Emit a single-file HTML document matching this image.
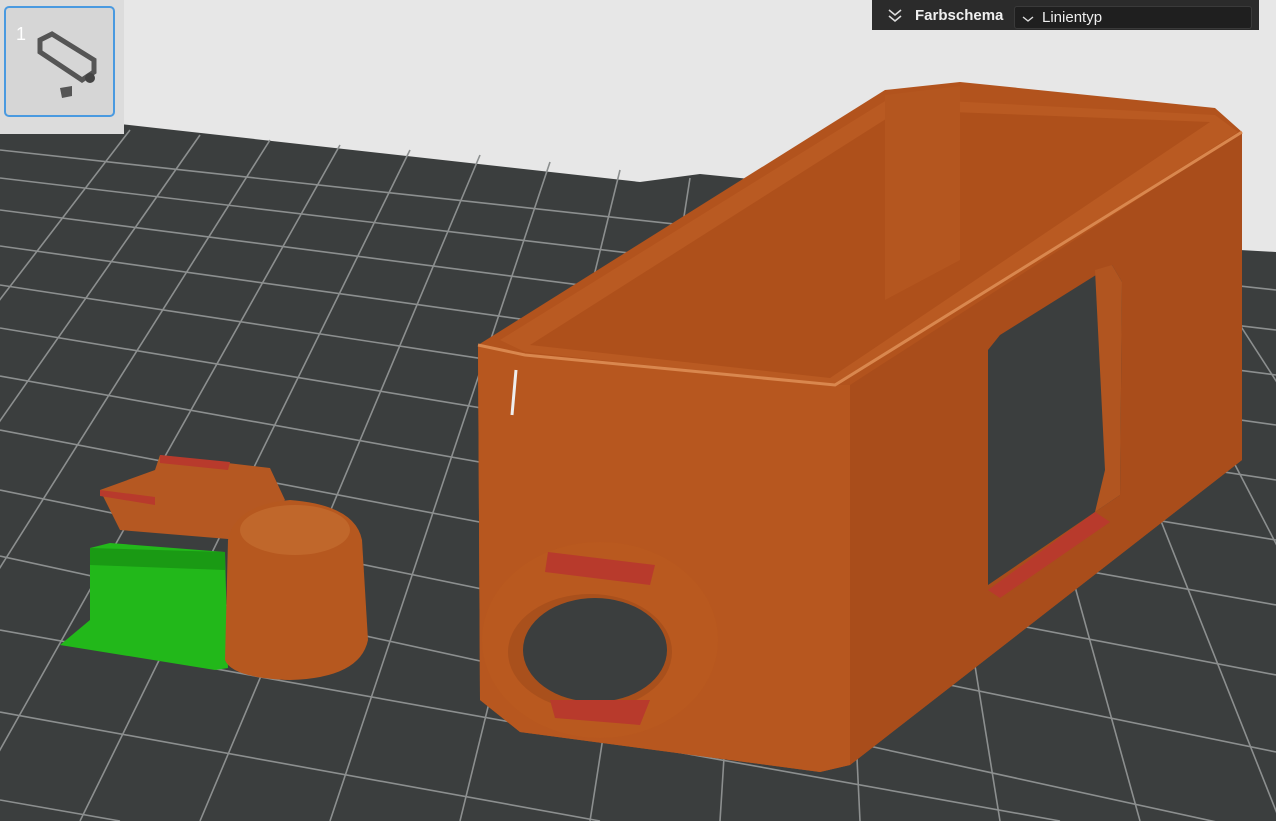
<!DOCTYPE html>
<html><head><meta charset="utf-8"><style>
html,body{margin:0;padding:0;width:1276px;height:821px;overflow:hidden;background:#e7e7e7;font-family:"Liberation Sans",sans-serif}
svg{position:absolute;left:0;top:0}
.panel{position:absolute;left:872px;top:0;width:387px;height:30px;background:#2b2b2b}
.panel .t{position:absolute;left:43px;top:7px;color:#f0f0f0;font-weight:bold;font-size:15px}
.panel .dd{position:absolute;left:142px;top:6px;width:236px;height:21px;background:#1f1f1f;border:1px solid #3a3a3a;border-radius:3px;color:#eee;font-size:15px}
.panel .dd span{position:absolute;left:27px;top:2px}
.thumb{position:absolute;left:0;top:0;width:124px;height:134px;background:#dcdcdc}
.thumb .b{position:absolute;left:4px;top:6px;width:107px;height:107px;border:2px solid #4a9ae0;border-radius:5px;background:#d6d6d6}
</style></head><body>
<svg width="1276" height="821" viewBox="0 0 1276 821">
<polygon points="0,128 120,124 640,182 700,174 760,180 1240,250 1276,252 1276,821 0,821" fill="#3b3e3e"/>
<g stroke="#8c8f8f" stroke-width="1.6" fill="none">
<line x1="0" y1="150" x2="1276" y2="290"/>
<line x1="0" y1="178" x2="1276" y2="330"/>
<line x1="0" y1="210" x2="1276" y2="375"/>
<line x1="0" y1="246" x2="1276" y2="425"/>
<line x1="0" y1="285" x2="1276" y2="480"/>
<line x1="0" y1="328" x2="1276" y2="540"/>
<line x1="0" y1="376" x2="1276" y2="605"/>
<line x1="0" y1="430" x2="1276" y2="675"/>
<line x1="0" y1="490" x2="1276" y2="752"/>
<line x1="0" y1="556" x2="1276" y2="835"/>
<line x1="0" y1="630" x2="1060" y2="821"/>
<line x1="0" y1="712" x2="600" y2="821"/>
<line x1="0" y1="800" x2="120" y2="821"/>
<line x1="-400" y1="821" x2="130" y2="130"/>
<line x1="-280" y1="821" x2="200" y2="135"/>
<line x1="-160" y1="821" x2="270" y2="140"/>
<line x1="-40" y1="821" x2="340" y2="145"/>
<line x1="80" y1="821" x2="410" y2="150"/>
<line x1="200" y1="821" x2="480" y2="155"/>
<line x1="330" y1="821" x2="550" y2="162"/>
<line x1="460" y1="821" x2="620" y2="170"/>
<line x1="590" y1="821" x2="690" y2="178"/>
<line x1="720" y1="821" x2="760" y2="185"/>
<line x1="860" y1="821" x2="830" y2="192"/>
<line x1="1000" y1="821" x2="900" y2="200"/>
<line x1="1140" y1="821" x2="970" y2="208"/>
<line x1="1280" y1="821" x2="1040" y2="216"/>
<line x1="1420" y1="821" x2="1110" y2="224"/>
<line x1="1560" y1="821" x2="1180" y2="232"/>
</g>
<polygon points="478,345 885,90 960,82 1215,108 1242,132 1242,460 850,765 820,772 520,732 480,700" fill="#b2531d"/>
<polygon points="500,340 890,98 1215,115 1238,132 835,385 525,352" fill="#b95a22"/>
<polygon points="530,345 900,110 1210,122 830,378" fill="#ae501b"/>
<polygon points="885,95 960,86 960,260 885,300" fill="#b4561f"/>
<polygon points="850,385 1242,132 1242,460 850,765" fill="#a94d1b"/>
<polygon points="478,345 525,355 835,385 850,385 850,765 820,772 520,732 480,700" fill="#b7571f"/>
<polyline points="478,345 525,355 835,385 1242,132" stroke="#d9874e" stroke-width="3" fill="none"/>
<line x1="516" y1="370" x2="512" y2="415" stroke="#eee" stroke-width="3"/>
<polygon points="1000,335 1112,265 1122,282 1120,495 1095,512 988,585 988,350" fill="#3b3e3e"/>
<polygon points="1095,270 1112,265 1122,282 1120,495 1095,512 1105,470" fill="#b15520"/>
<polygon points="988,590 1095,512 1110,522 1000,598" fill="#b83a2c"/>
<ellipse cx="600" cy="640" rx="118" ry="98" fill="#b9591f"/>
<polygon points="548,552 655,565 650,585 545,572" fill="#b83a2c"/>
<ellipse cx="590" cy="652" rx="82" ry="58" fill="#a9501c"/>
<ellipse cx="595" cy="650" rx="72" ry="52" fill="#3b3e3e"/>
<polygon points="550,700 650,700 640,725 555,718" fill="#b83a2c"/>
<polygon points="60,645 90,620 90,548 110,543 225,552 228,668 215,670" fill="#22b81a"/>
<polygon points="90,548 225,552 225,570 90,565" fill="#1a9a14"/>
<polygon points="100,490 155,470 160,455 270,468 285,500 240,540 120,530" fill="#b55822"/>
<polygon points="100,490 155,497 155,505 100,496" fill="#b83a2c"/>
<polygon points="160,455 230,462 228,470 160,463" fill="#b83a2c"/>
<path d="M228,540 Q235,505 290,500 Q355,505 362,540 L368,640 Q360,678 290,680 Q232,678 225,660 Z" fill="#b6581f"/>
<ellipse cx="295" cy="530" rx="55" ry="25" fill="#c0672b"/>
</svg>
<div class="thumb"><div class="b">
<svg width="107" height="107" viewBox="0 0 107 107"><g fill="none" stroke="#555" stroke-width="5"><polygon points="34,32 46,26 88,52 88,64 76,72 34,44"/></g><circle cx="84" cy="70" r="5" fill="#444"/><polygon points="54,80 66,78 66,88 56,90" fill="#555"/><text x="10" y="32" fill="#fff" font-size="18" font-family="Liberation Sans">1</text></svg>
</div></div>
<div class="panel">
<svg width="20" height="20" style="left:14px;top:7px" viewBox="0 0 20 20"><path d="M3,3 L9,8 L15,3 M3,9 L9,14 L15,9" stroke="#ddd" stroke-width="1.6" fill="none"/></svg>
<div class="t">Farbschema</div>
<div class="dd"><svg width="14" height="10" style="left:6px;top:7px" viewBox="0 0 14 10"><path d="M2,3 L7,7 L12,3" stroke="#ddd" stroke-width="1.4" fill="none"/></svg><span>Linientyp</span></div>
</div>
</body></html>
